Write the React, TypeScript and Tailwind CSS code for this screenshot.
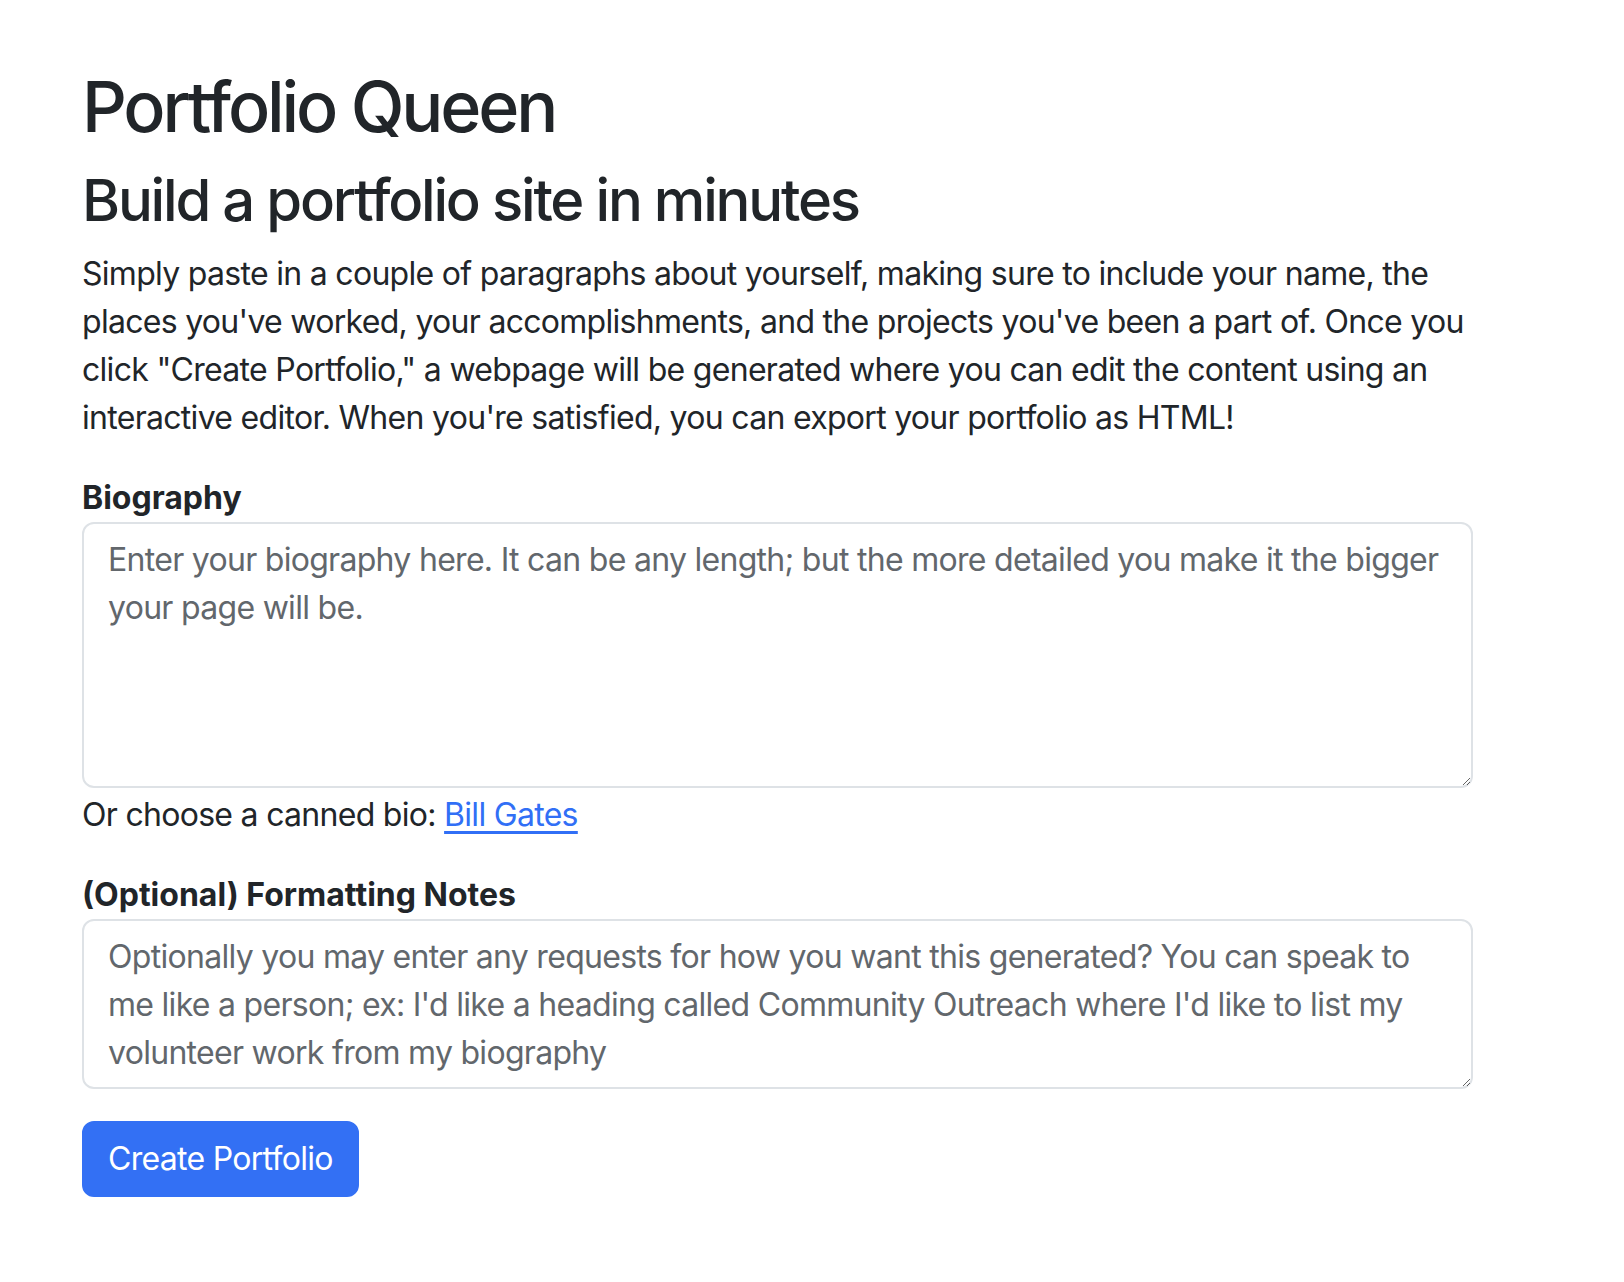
export default function App() {
  return (
    <div className="min-h-screen bg-white text-[#212529] font-[Inter,sans-serif]">
      <div className="w-[1473px] pl-[82px] pt-[65px]">
        <h1 className="mb-4 text-[70px] font-medium leading-[84px] tracking-[-0.045em]">Portfolio Queen</h1>
        <h2 className="mb-[15px] text-[58px] font-medium leading-[70px] tracking-[-0.038em]">
          Build a portfolio site in minutes
        </h2>
        <p className="mb-8 text-[32px] leading-[48px] tracking-[-0.022em]">
          Simply paste in a couple of paragraphs about yourself, making sure to include your name, the places
          you've worked, your accomplishments, and the projects you've been a part of. Once you click "Create
          Portfolio," a webpage will be generated where you can edit the content using an interactive editor. When
          you're satisfied, you can export your portfolio as HTML!
        </p>

        <form className="text-[32px] leading-[48px] tracking-[-0.022em]">
          <label htmlFor="bio" className="block font-bold tracking-normal">
            Biography
          </label>
          <textarea
            id="bio"
            rows={5}
            className="block h-[266px] w-full rounded-[12px] border-2 border-[#dee2e6] px-6 py-3 outline-none placeholder:text-[#62676c]"
            placeholder="Enter your biography here. It can be any length; but the more detailed you make it the bigger your page will be."
          />
          <div className="mt-[3px] mb-8">
            Or choose a canned bio:{" "}
            <a href="#" className="text-[#316ff6] underline underline-offset-[5px]">
              Bill Gates
            </a>
          </div>

          <label htmlFor="notes" className="block font-bold tracking-normal">
            (Optional) Formatting Notes
          </label>
          <textarea
            id="notes"
            rows={3}
            className="block h-[170px] w-full rounded-[12px] border-2 border-[#dee2e6] px-6 py-3 outline-none placeholder:text-[#62676c]"
            placeholder="Optionally you may enter any requests for how you want this generated? You can speak to me like a person; ex: I'd like a heading called Community Outreach where I'd like to list my volunteer work from my biography"
          />

          <button
            type="button"
            className="mt-8 rounded-[12px] border-2 border-[#3370f4] bg-[#3370f4] px-6 py-3 text-white"
          >
            Create Portfolio
          </button>
        </form>
      </div>
    </div>
  );
}
